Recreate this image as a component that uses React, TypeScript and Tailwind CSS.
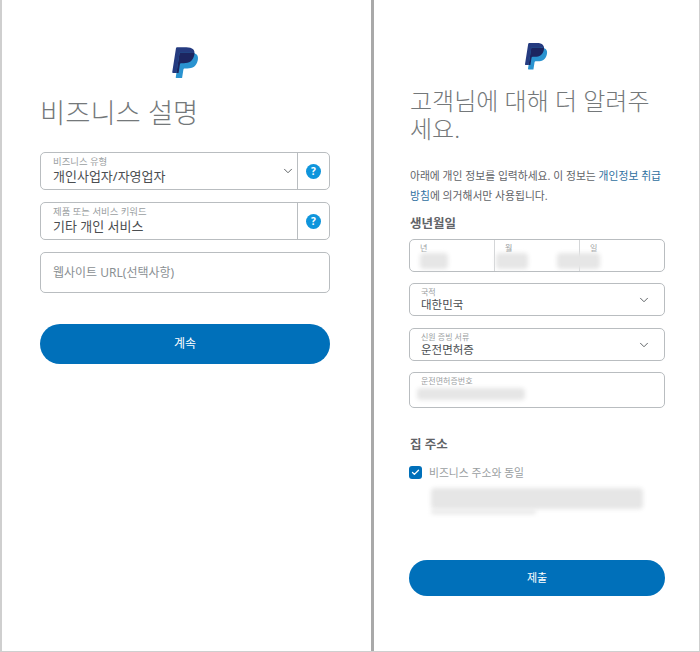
import React from 'react'
import { ChevronDown, Check } from 'lucide-react'
import clsx from 'clsx'

const FONT = "font-['Noto_Sans','Noto_Sans_CJK_KR',sans-serif]"

function PayPalLogo({ id, className }: { id: string; className: string }) {
  const d =
    'M7.1 21.3H2.5a.64.64 0 0 1-.63-.74L4.94.9C5.03.38 5.47 0 6 0h7.46c2.57 0 4.58.54 5.69 1.81 1.01 1.15 1.3 2.42 1.01 4.29l-.08.43c-.98 5.05-4.35 6.8-8.65 6.8h-2.19c-.52 0-.97.38-1.05.9z'
  return (
    <svg viewBox="0 0 24 27" className={className}>
      <defs>
        <clipPath id={id}>
          <path d={d} />
        </clipPath>
      </defs>
      <path d={d} fill="#253b80" />
      <g transform="translate(2.9 4.3)">
        <path d={d} fill="#2a93d0" />
      </g>
      <g clipPath={`url(#${id})`}>
        <g transform="translate(2.9 4.3)">
          <path d={d} fill="#1c2560" />
        </g>
      </g>
    </svg>
  )
}

function HelpIcon() {
  return (
    <div className="flex w-[32px] shrink-0 items-center justify-center self-stretch border-l border-[#b9bdc0]">
      <span className="flex h-[15px] w-[15px] items-center justify-center rounded-full bg-[#0f95dc] text-[10px] font-bold leading-none text-white">
        ?
      </span>
    </div>
  )
}

function Field({
  label,
  value,
  height,
  chevron,
  help,
  small,
  children,
}: {
  label: string
  value?: string
  height: string
  chevron?: boolean
  help?: boolean
  small?: boolean
  children?: React.ReactNode
}) {
  return (
    <div className={clsx('flex rounded-[5px] border border-[#b9bdc0] bg-white', height)}>
      <div className={clsx('min-w-0 flex-1', small ? 'pl-[11px] pt-[2px]' : 'pl-[12px] pt-[3px]')}>
        <div className={clsx('leading-[11px] text-[#9a9ea1]', small ? 'text-[8px]' : 'text-[9.4px]')}>{label}</div>
        {value && (
          <div className={clsx('text-[#4a4d50]', small ? 'text-[11.5px] leading-[16px]' : 'text-[13px] leading-[18px]')}>
            {value}
          </div>
        )}
        {children}
      </div>
      {chevron && (
        <div className={clsx('flex items-center', small ? 'pr-[13px]' : 'pr-[2px]')}>
          <ChevronDown className="h-[14px] w-[14px] text-[#55595c]" strokeWidth={1.6} />
        </div>
      )}
      {help && <HelpIcon />}
    </div>
  )
}

function Blur({ className }: { className: string }) {
  return <div className={clsx('rounded-sm bg-[#e6e6e6] blur-[2px]', className)} />
}

function BusinessPanel() {
  return (
    <div className="h-full w-[369px] shrink-0 pl-[38px] pr-[41px] pt-[47px]">
      <div className="flex justify-center pr-[2px]">
        <PayPalLogo id="pp-left" className="h-[33px] w-[29px]" />
      </div>
      <h1 className="mt-[14px] text-[27.4px] font-light leading-[38px] text-[#74787a]">비즈니스 설명</h1>
      <div className="mt-[20px] flex flex-col gap-[12px]">
        <Field label="비즈니스 유형" value="개인사업자/자영업자" height="h-[38px]" chevron help />
        <Field label="제품 또는 서비스 키워드" value="기타 개인 서비스" height="h-[38px]" help />
        <div className="flex h-[41px] items-center rounded-[5px] border border-[#b9bdc0] pl-[12px] text-[12px] text-[#8a8f93]">
          웹사이트 URL(선택사항)
        </div>
      </div>
      <button className="mt-[31px] h-[40px] w-full rounded-full bg-[#0070ba] text-[12px] text-white">계속</button>
    </div>
  )
}

function DateCell({ label, blur, border }: { label: string; blur: string; border?: boolean }) {
  return (
    <div className={clsx('flex-1 pl-[10px] pt-[2px]', border && 'border-l border-[#d4d6d8]')}>
      <div className="text-[8px] leading-[11px] text-[#9a9ea1]">{label}</div>
      <Blur className={blur} />
    </div>
  )
}

function CustomerPanel() {
  return (
    <div className="h-full min-w-0 flex-1 pl-[35px] pr-[34px] pt-[43px]">
      <div className="flex justify-center pr-[4px]">
        <PayPalLogo id="pp-right" className="h-[28px] w-[25px]" />
      </div>
      <h1 className="mt-[16px] pl-[1px] text-[24px] font-light leading-[28px] text-[#74787a]">고객님에 대해 더 알려주세요.</h1>
      <div className="mt-[23px] pl-[1px] text-[10.8px] leading-[20px] text-[#5f6367]">
        <p>
          아래에 개인 정보를 입력하세요. 이 정보는 <span className="text-[#2f6f9f]">개인정보 취급</span>
        </p>
        <p>
          <span className="text-[#2f6f9f]">방침</span>에 의거해서만 사용됩니다.
        </p>
      </div>
      <h2 className="mt-[8px] pl-[1px] text-[12.5px] font-bold leading-[20px] text-[#5f6367]">생년월일</h2>
      <div className="mt-[5px] flex h-[33px] rounded-[5px] border border-[#b9bdc0]">
        <DateCell label="년" blur="ml-0 h-[16px] w-[28px]" />
        <DateCell label="월" blur="-ml-[9px] h-[16px] w-[32px]" border />
        <DateCell label="일" blur="-ml-[33px] h-[16px] w-[43px]" border />
      </div>
      <div className="mt-[11px] flex flex-col gap-[11px]">
        <Field label="국적" value="대한민국" height="h-[33px]" chevron small />
        <div className="mt-[1px]">
          <Field label="신원 증빙 서류" value="운전면허증" height="h-[33px]" chevron small />
        </div>
        <Field label="운전면허증번호" height="h-[36px]" small>
          <Blur className="-ml-[4px] mt-[2px] h-[12px] w-[108px]" />
        </Field>
      </div>
      <h2 className="mt-[27px] pl-[1px] text-[12.5px] font-bold leading-[20px] text-[#5f6367]">집 주소</h2>
      <label className="mt-[11px] flex items-center gap-[7px]">
        <span className="flex h-[13px] w-[13px] items-center justify-center rounded-[3px] bg-[#0070ba]">
          <Check className="h-[9px] w-[9px] text-white" strokeWidth={3.5} />
        </span>
        <span className="text-[10.8px] leading-[13px] text-[#9a9ea1]">비즈니스 주소와 동일</span>
      </label>
      <div className="ml-[22px] mt-[9px] flex flex-col gap-[1px]">
        <Blur className="h-[21px] w-[212px]" />
        <Blur className="h-[4px] w-[105px]" />
      </div>
      <button className="mt-[46px] h-[36px] w-full rounded-full bg-[#0070ba] text-[11px] text-white">제출</button>
    </div>
  )
}

export default function App() {
  return (
    <div className={clsx('flex h-[652px] w-[700px] overflow-hidden border-b border-l-2 border-r border-[#cfcfcf] bg-white', FONT)}>
      <BusinessPanel />
      <div className="h-full w-[3px] shrink-0 bg-[#a9a9a9]" />
      <CustomerPanel />
    </div>
  )
}
